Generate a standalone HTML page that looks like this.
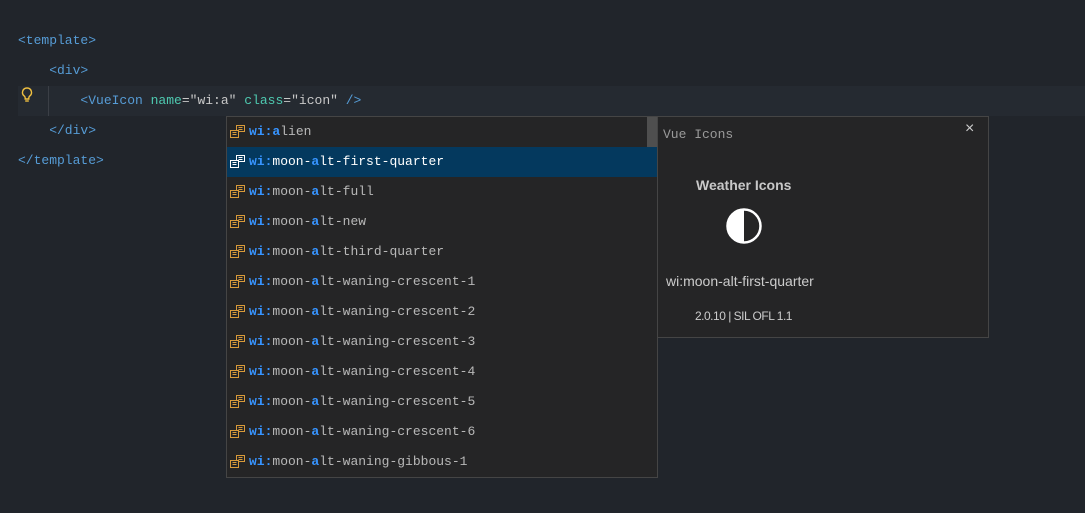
<!DOCTYPE html>
<html><head><style>
*{margin:0;padding:0;box-sizing:border-box}
body{width:1085px;height:513px;background:#21252b;overflow:hidden;position:relative;font-family:"Liberation Mono",monospace;font-size:13px}
.l{position:absolute;left:18px;height:30px;line-height:30px;white-space:pre;color:#569cd6}
.cur{position:absolute;left:18px;top:86px;width:1067px;height:30px;background:#252a31}
.a{color:#4ec9b0}.e{color:#c8c8c8}
.sug{position:absolute;left:226px;top:116px;width:432px;height:362px;background:#252526;border:1px solid #454545}
.row{position:absolute;left:0;width:430px;height:30px;line-height:30px;color:#b8b8b8;padding-left:22px;white-space:pre}
.row b{color:#3794ff;font-weight:bold}
.row i{font-style:normal;color:#3794ff;font-weight:bold}
.row.sel{background:#04395e;color:#fff}
.ic{position:absolute;left:2px;top:7px}
.det{position:absolute;left:657px;top:116px;width:332px;height:222px;background:#252526;border:1px solid #454545;color:#ccc;font-family:"Liberation Sans",sans-serif}
</style></head><body>
<div class="cur"></div>
<div style="position:absolute;left:48px;top:86px;width:1px;height:30px;background:#3b3f46"></div>
<div class="l" style="top:26px">&lt;template&gt;</div>
<div class="l" style="top:56px">    &lt;div&gt;</div>
<div class="l" style="top:86px">        &lt;VueIcon <span class="a">name</span><span class="e">=</span><span style="color:#c8c8c8">"wi:a"</span> <span class="a">class</span><span class="e">=</span><span style="color:#c8c8c8">"icon"</span> /&gt;</div>
<div class="l" style="top:116px">    &lt;/div&gt;</div>
<div class="l" style="top:146px">&lt;/template&gt;</div>
<svg style="position:absolute;left:20px;top:86px" width="14" height="18" viewBox="0 0 14 18"><path d="M7 2a4.5 4.5 0 0 0-2.7 8.1c.6.5.9 1.2.9 1.9v1h3.6v-1c0-.7.3-1.4.9-1.9A4.5 4.5 0 0 0 7 2z" fill="none" stroke="#f0c040" stroke-width="1.4"/><path d="M5.2 15h3.6" stroke="#f0c040" stroke-width="1.4"/></svg>
<div class="sug">
<div id="rows"></div>
<div style="position:absolute;right:0;top:0;width:10px;height:30px;background:#4f4f4f"></div>
</div>
<div class="det">
<div style="position:absolute;left:5px;top:10px;font-family:'Liberation Mono',monospace;font-size:13px;color:#9a9a9a">Vue Icons</div>
<div style="position:absolute;left:307px;top:3px;font-size:16px;color:#ccc">×</div>
<div style="position:absolute;left:38px;top:60px;font-weight:bold;font-size:14px;color:#c8c8c8">Weather Icons</div>
<svg style="position:absolute;left:67px;top:90px" width="38" height="38" viewBox="0 0 38 38"><circle cx="19" cy="19" r="16.5" fill="none" stroke="#fff" stroke-width="2.5"/><path d="M19 2.5A16.5 16.5 0 0 0 19 35.5z" fill="#fff"/></svg>
<div style="position:absolute;left:8px;top:156px;font-size:14px;color:#ccc">wi:moon-alt-first-quarter</div>
<div style="position:absolute;left:37px;top:192px;font-size:12px;color:#ccc;letter-spacing:-0.5px">2.0.10 | SIL OFL 1.1</div>
</div>
<script>
var n=["alien","moon-alt-first-quarter","moon-alt-full","moon-alt-new","moon-alt-third-quarter","moon-alt-waning-crescent-1","moon-alt-waning-crescent-2","moon-alt-waning-crescent-3","moon-alt-waning-crescent-4","moon-alt-waning-crescent-5","moon-alt-waning-crescent-6","moon-alt-waning-gibbous-1"];
var h="";n.forEach(function(s,k){var c=k==1?"#fff":"#d89a3a";var bg=k==1?"#04395e":"#252526";
var t=k==0?"<i>a</i>lien":s.replace("-alt","-<i>a</i>lt");
h+='<div class="row'+(k==1?' sel':'')+'" style="top:'+(k*30)+'px"><svg class="ic" width="17" height="16" viewBox="0 0 17 16"><rect x="7.5" y="1.5" width="8" height="6" fill="'+bg+'" stroke="'+c+'"/><path d="M9.5 3.5h4M9.5 5.5h4" stroke="'+c+'"/><rect x="1.5" y="6.5" width="8" height="7" fill="'+bg+'" stroke="'+c+'"/><path d="M3.5 8.5h4M3.5 10.5h4" stroke="'+c+'"/></svg><b>wi:</b>'+t+'</div>';});
document.getElementById("rows").innerHTML=h;
</script>
</body></html>
